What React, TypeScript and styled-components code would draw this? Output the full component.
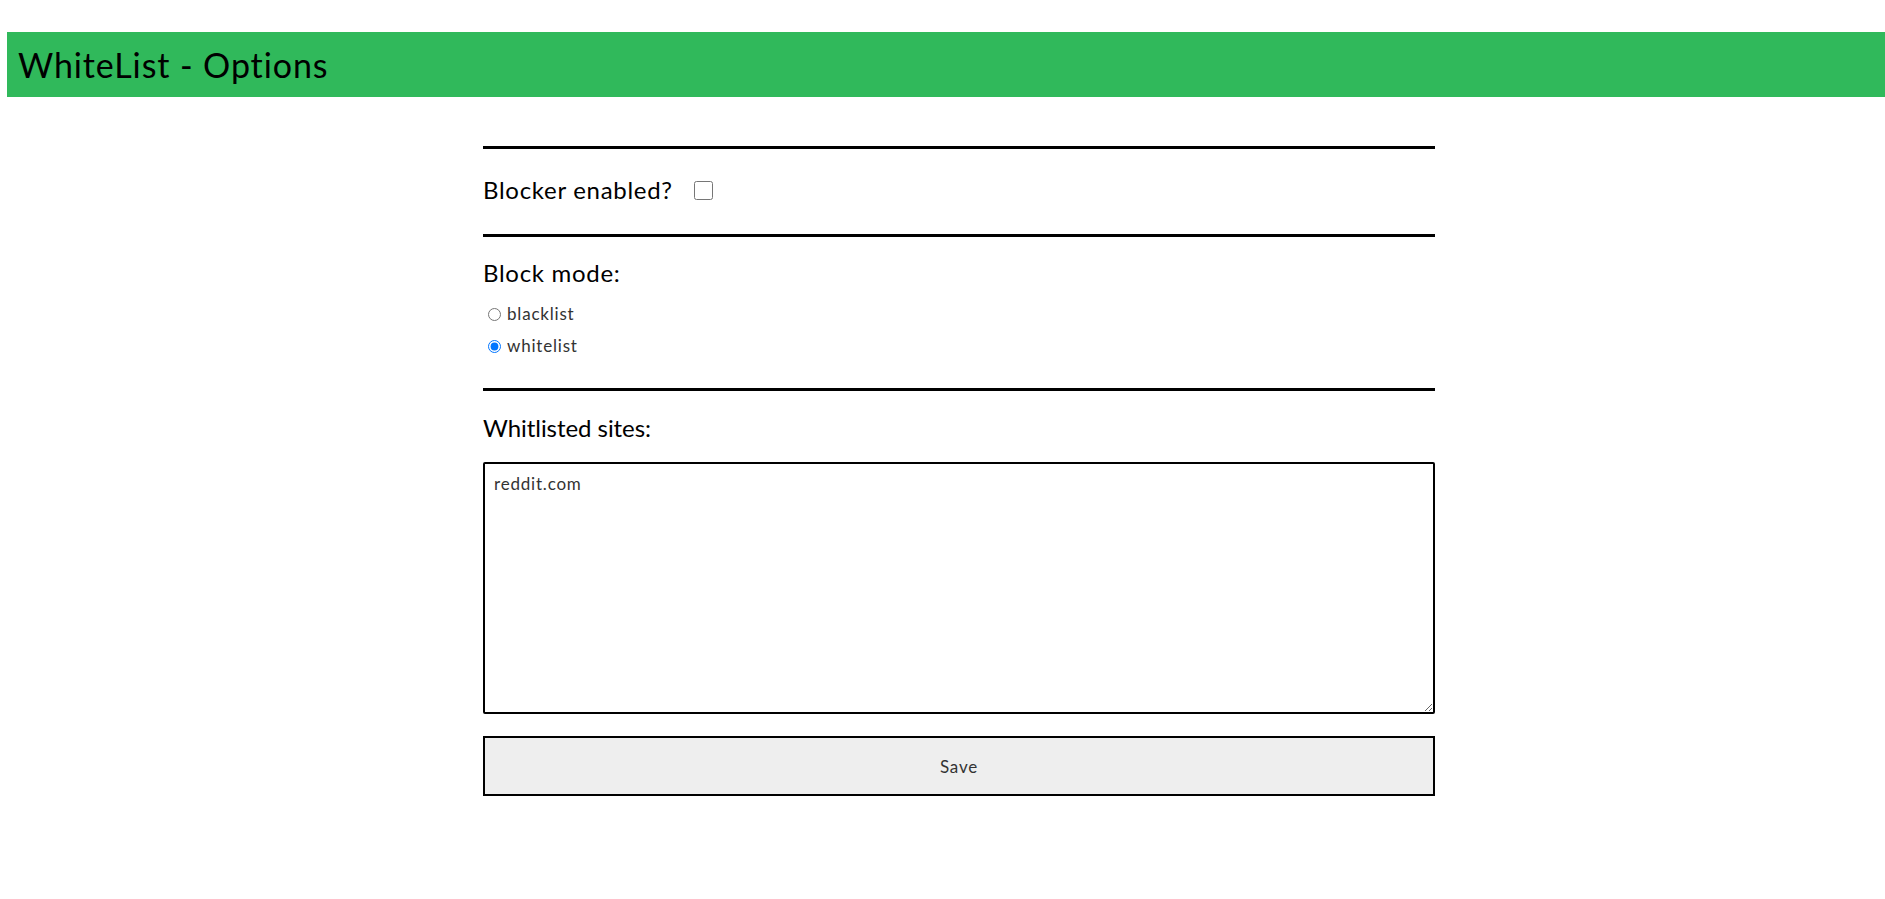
import React from "react";
import styled, { createGlobalStyle } from "styled-components";

const Global = createGlobalStyle`
  html, body { margin: 0; padding: 0; background: #fff; }
  body { font-family: Lato, "Noto Sans", sans-serif; color: #000; }
`;

const Header = styled.header`
  margin: 32px 0 0 7px;
  height: 65px;
  background: #30b95b;
  display: flex;
  align-items: center;
  padding-left: 11px;
`;

const Title = styled.h1`
  margin: 0;
  font-size: 34px;
  letter-spacing: 0.9px;
  font-weight: 400;
  color: #000;
`;

const Main = styled.main`
  width: 952px;
  margin: 49px 0 0 483px;
  display: flex;
  flex-direction: column;
`;

const Rule = styled.hr`
  margin: 0;
  border: none;
  height: 3px;
  background: #000;
`;

const Section = styled.section<{ $pt: number; $pb: number }>`
  padding: ${(p) => p.$pt}px 0 ${(p) => p.$pb}px;
  display: flex;
  flex-direction: column;
`;

const Row = styled.div`
  display: flex;
  align-items: center;
  gap: 21px;
`;

const Heading = styled.span<{ $ls?: number }>`
  font-size: 24px;
  letter-spacing: ${(p) => p.$ls ?? 0.7}px;
  line-height: 28px;
  color: #000;
`;

const Check = styled.input`
  width: 19px;
  height: 19px;
  margin: 0;
`;

const RadioRow = styled.label<{ $mt: number }>`
  display: flex;
  align-items: center;
  margin-top: ${(p) => p.$mt}px;
  font-size: 17px;
  letter-spacing: 0.8px;
  line-height: 20px;
  color: #333;
  input {
    margin: 0 6px 0 5px;
    width: 13px;
    height: 13px;
  }
`;

const Area = styled.textarea`
  box-sizing: border-box;
  margin-top: 20px;
  width: 952px;
  height: 252px;
  border: 2px solid #000;
  border-radius: 2px;
  padding: 10px 9px 9px;
  font-family: Lato, "Noto Sans", sans-serif;
  font-size: 17px;
  letter-spacing: 0.8px;
  line-height: 20px;
  color: #333;
  outline: none;
`;

const SaveButton = styled.button`
  box-sizing: border-box;
  margin-top: 22px;
  width: 952px;
  height: 60px;
  border: 2px solid #000;
  background: #eeeeee;
  font-family: Lato, "Noto Sans", sans-serif;
  font-size: 17px;
  letter-spacing: 0.8px;
  color: #333;
  cursor: pointer;
`;

export default function App() {
  return (
    <>
      <Global />
      <Header>
        <Title>WhiteList - Options</Title>
      </Header>
      <Main>
        <Rule />
        <Section $pt={27} $pb={30}>
          <Row>
            <Heading>Blocker enabled?</Heading>
            <Check type="checkbox" />
          </Row>
        </Section>
        <Rule />
        <Section $pt={22} $pb={32}>
          <Heading>Block mode:</Heading>
          <RadioRow $mt={17}>
            <input type="radio" name="mode" value="blacklist" />
            blacklist
          </RadioRow>
          <RadioRow $mt={12}>
            <input type="radio" name="mode" value="whitelist" defaultChecked />
            whitelist
          </RadioRow>
        </Section>
        <Rule />
        <Section $pt={23} $pb={0}>
          <Heading $ls={-0.05}>Whitlisted sites:</Heading>
          <Area defaultValue="reddit.com" />
          <SaveButton>Save</SaveButton>
        </Section>
      </Main>
    </>
  );
}
